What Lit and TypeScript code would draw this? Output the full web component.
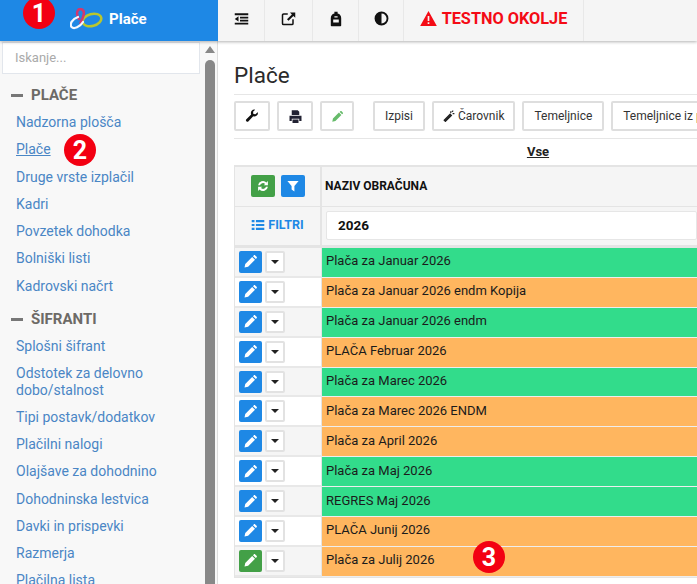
import {LitElement, html, css, svg} from "lit";
import {customElement} from "lit/decorators.js";

const GREEN = "#32dc8b";
const ORANGE = "#ffb65f";

const rows = [
  {name: "Plača za Januar 2026", color: GREEN},
  {name: "Plača za Januar 2026 endm Kopija", color: ORANGE},
  {name: "Plača za Januar 2026 endm", color: GREEN},
  {name: "PLAČA Februar 2026", color: ORANGE},
  {name: "Plača za Marec 2026", color: GREEN},
  {name: "Plača za Marec 2026 ENDM", color: ORANGE},
  {name: "Plača za April 2026", color: ORANGE},
  {name: "Plača za Maj 2026", color: GREEN},
  {name: "REGRES Maj 2026", color: GREEN},
  {name: "PLAČA Junij 2026", color: ORANGE},
  {name: "Plača za Julij 2026", color: ORANGE, open: true},
];

const pencil = svg`<path d="M3 13.200 2 18l4.800-1L16 7.800 12.200 4zM13.300 2.900l3.800 3.800 1-1c.6-.6.6-1.400 0-2l-1.800-1.800c-.6-.6-1.400-.6-2 0z" fill="currentColor"/>`;

const icon = (body: unknown, size = 14) =>
  html`<svg width=${size} height=${size} viewBox="0 0 20 20">${body}</svg>`;

@customElement("app-root")
export class AppRoot extends LitElement {
  static styles = css`
    :host {
      display: block;
      width: 697px;
      height: 584px;
      overflow: hidden;
      position: relative;
      font-family: Roboto, sans-serif;
      font-size: 13px;
      color: #222;
      background: #fff;
    }
    .topbar {
      display: flex;
      height: 41px;
      background: #f5f5f5;
      box-shadow: 0 1px 3px rgba(0, 0, 0, 0.3);
      position: relative;
    }
    .brand {
      width: 218px;
      flex: none;
      background: #1e88e5;
      display: flex;
      align-items: center;
      padding: 0 0 3px 70px;
      box-sizing: border-box;
      gap: 6px;
      color: #fff;
      font-weight: 700;
      font-size: 15px;
    }
    .tool {
      display: flex;
      align-items: center;
      justify-content: center;
      padding-bottom: 4px;
      border-right: 1px solid #e8e8e8;
      color: #111;
      box-sizing: border-box;
    }
    .warn {
      width: 180px;
      gap: 5px;
      color: #f40b15;
      font-weight: 700;
      font-size: 16.300px;
    }
    .body {
      display: flex;
      height: 543px;
    }
    .sidebar {
      width: 218px;
      flex: none;
      background: #f8f8f8;
      border-right: 1px solid #ddd;
      box-sizing: border-box;
      display: flex;
      overflow: hidden;
    }
    .side-content {
      width: 205px;
      flex: none;
    }
    .search {
      margin: 1px 0 0 2px;
      width: 198px;
      height: 32px;
      box-sizing: border-box;
      background: #fff;
      border: 1px solid #e2e6ec;
      color: #aaa;
      padding: 0 12px;
      line-height: 30px;
    }
    .group {
      display: flex;
      align-items: center;
      gap: 8px;
      padding-left: 11px;
      color: #6d6a66;
      font-weight: 700;
      font-size: 15px;
      height: 20px;
      margin: 11px 0 4px;
    }
    .group i {
      width: 12px;
      height: 3px;
      background: #777;
    }
    .group.second {
      margin: 9px 0 4px;
    }
    .link {
      display: block;
      padding: 5px 10px 5.300px 16px;
      color: #4a86c5;
      font-size: 14px;
      line-height: 17px;
    }
    .group.second ~ .link {
      padding-bottom: 5.100px;
    }
    .link.active {
      text-decoration: underline;
    }
    .scroll {
      width: 10px;
      display: flex;
      flex-direction: column;
      align-items: center;
    }
    .scroll .up {
      margin-top: 5px;
      width: 0;
      height: 0;
      border: 5px solid transparent;
      border-top: 0;
      border-bottom: 7px solid #888;
    }
    .scroll .thumb {
      margin-top: 7px;
      width: 10px;
      flex: 1;
      border-radius: 5px 5px 0 0;
      background: #888;
    }
    .main {
      flex: 1;
      min-width: 0;
      padding: 0 0 0 16px;
      overflow: hidden;
    }
    h1 {
      margin: 0;
      font-weight: 400;
      font-size: 22.500px;
      height: 53px;
      line-height: 68px;
      color: #2b2b2b;
      border-bottom: 1px solid #e6e6e6;
    }
    .buttons {
      display: flex;
      padding: 6px 0 7px;
      gap: 7px;
      border-bottom: 1px solid #e6e6e6;
      white-space: nowrap;
    }
    .btn {
      height: 30px;
      box-sizing: border-box;
      border: 2px solid #dedede;
      border-radius: 2px;
      background: #fff;
      display: flex;
      align-items: center;
      justify-content: center;
      flex: none;
      color: #333;
      font-size: 12px;
      gap: 3px;
    }
    .btn.ic {
      width: 36px;
    }
    .btn.txt {
      padding: 0 10px;
    }
    .gap {
      width: 5px;
      flex: none;
    }
    .vse {
      height: 26px;
      line-height: 26px;
      text-align: center;
      width: 608px;
      font-weight: 700;
      font-size: 13px;
      text-decoration: underline;
    }
    .table {
      display: grid;
      grid-template-columns: 87px 1fr;
      border-top: 2px solid #e4e4e4;
      border-left: 1px solid #e4e4e4;
      border-bottom: 1px solid #e4e4e4;
    }
    .head {
      background: #f5f5f5;
      border-right: 2px solid #e4e4e4;
      display: flex;
      align-items: center;
      justify-content: center;
      gap: 6px;
      box-sizing: border-box;
    }
    .head.title {
      border-right: 0;
      justify-content: flex-start;
      padding-left: 3px;
      font-weight: 700;
      font-size: 12px;
      color: #111;
    }
    .h1 {
      height: 40px;
      padding-bottom: 2px;
      border-bottom: 1px solid #e4e4e4;
    }
    .h2 {
      height: 41px;
      padding-bottom: 3px;
      border-bottom: 3px solid #e4e4e4;
    }
    .square {
      width: 24px;
      height: 22px;
      border-radius: 2px;
      display: flex;
      align-items: center;
      justify-content: center;
      color: #fff;
    }
    .filtri {
      color: #1e88e5;
      font-weight: 700;
      font-size: 12.500px;
      gap: 3px;
    }
    .head.input {
      border-right: 0;
      justify-content: flex-start;
      padding: 0 0 2px 4px;
    }
    .field {
      flex: 1;
      height: 29px;
      background: #fff;
      border: 1px solid #e6e6e6;
      border-radius: 2px;
      box-sizing: border-box;
      padding-left: 11px;
      line-height: 27px;
      font-weight: 700;
      font-size: 13.500px;
      color: #111;
    }
    .actions {
      height: 29.900px;
      box-sizing: border-box;
      display: flex;
      align-items: center;
      gap: 3px;
      padding-left: 4px;
      background: #fff;
      border-right: 1px solid #e4e4e4;
      border-bottom: 2px solid #e8e8e8;
    }
    .actions.alt {
      background: #f5f5f5;
    }
    .edit {
      width: 23px;
      height: 22px;
      border-radius: 2px;
      background: #1e88e5;
      color: #fff;
      display: flex;
      align-items: center;
      justify-content: center;
    }
    .edit.open {
      background: #43a047;
    }
    .drop {
      width: 20px;
      height: 22px;
      box-sizing: border-box;
      background: #fff;
      border: 2px solid #e2e2e2;
      border-radius: 2px;
      display: flex;
      align-items: center;
      justify-content: center;
    }
    .drop::after {
      content: "";
      border: 4px solid transparent;
      border-top: 4px solid #222;
      border-bottom: 0;
    }
    .name {
      height: 29.900px;
      box-sizing: border-box;
      padding: 0 0 3px 4px;
      display: flex;
      align-items: center;
      border-bottom: 1px solid #eee;
      font-size: 13px;
      color: #1b1b1b;
      white-space: nowrap;
    }
    .pin {
      position: absolute;
      width: 32px;
      height: 32px;
      border-radius: 50%;
      background: #f30012;
      color: #fff;
      font-weight: 700;
      font-size: 25px;
      display: flex;
      align-items: center;
      justify-content: center;
    }
  `;

  render() {
    const group1 = ["Nadzorna plošča", "Plače", "Druge vrste izplačil", "Kadri", "Povzetek dohodka", "Bolniški listi", "Kadrovski načrt"];
    const group2 = ["Splošni šifrant", "Odstotek za delovno dobo/stalnost", "Tipi postavk/dodatkov", "Plačilni nalogi", "Olajšave za dohodnino", "Dohodninska lestvica", "Davki in prispevki", "Razmerja", "Plačilna lista"];
    return html`
      <div class="topbar">
        <div class="brand">
          <svg width="33" height="22" viewBox="0 0 33 22" fill="none">
            <ellipse cx="22" cy="12" rx="9.500" ry="6" transform="rotate(-15 22 12)" stroke="#b9c62e" stroke-width="2.500"/>
            <path d="M9 11C5 5 8 0 11.500 1.200 15.500 2.500 14 8 10.500 15" stroke="#d2386f" stroke-width="2.500" stroke-linecap="round"/>
            <path d="M8 9C2 11-.5 16 1.500 19 4 21.500 10 19 13 14" stroke="#f4f8ff" stroke-width="2.200" stroke-linecap="round"/>
          </svg>
          <span>Plače</span>
        </div>
        <div class="tool" style="width:47px">
          ${icon(svg`<path d="M1 3h18v2.500H1zM8 7.500h11V10H8zM8 11.500h11V14H8zM1 15.500h18V18H1zM6 7v7L1 10.500z" fill="currentColor"/>`, 15)}
        </div>
        <div class="tool" style="width:48px">
          ${icon(svg`<path d="M9 4H3.500A1.500 1.500 0 0 0 2 5.500v11A1.500 1.500 0 0 0 3.500 18h11a1.500 1.500 0 0 0 1.500-1.500V11" fill="none" stroke="currentColor" stroke-width="2"/><path d="M12 2h7v7l-2.500-2.500L10 13l-2-2 6.500-6.500z" fill="currentColor"/>`, 15)}
        </div>
        <div class="tool" style="width:46px">
          ${icon(svg`<path d="M8 1h4v2.200c3 .6 4.500 3 4.500 5.800v9a1 1 0 0 1-1 1h-11a1 1 0 0 1-1-1V9c0-2.800 1.500-5.200 4.500-5.800z" fill="currentColor"/><path d="M6.500 10.500h7v4h-7zM8 6.500h4V8H8z" fill="#f5f5f5"/>`, 16)}
        </div>
        <div class="tool" style="width:45px">
          ${icon(svg`<circle cx="10" cy="10" r="8" fill="none" stroke="currentColor" stroke-width="2.500"/><path d="M10 2a8 8 0 0 0 0 16z" fill="currentColor"/>`, 15)}
        </div>
        <div class="tool warn">
          <svg width="17" height="15" viewBox="0 0 20 18"><path fill-rule="evenodd" d="M10 0 20 18H0zM9 6v6h2V6zM9 13.500v2h2v-2z" fill="currentColor"/></svg>
          <span>TESTNO OKOLJE</span>
        </div>
      </div>
      <div class="body">
        <div class="sidebar">
          <div class="side-content">
            <div class="search">Iskanje...</div>
            <div class="group"><i></i>PLAČE</div>
            ${group1.map((t) => html`<a class="link ${t === "Plače" ? "active" : ""}">${t}</a>`)}
            <div class="group second"><i></i>ŠIFRANTI</div>
            ${group2.map((t) => html`<a class="link">${t}</a>`)}
          </div>
          <div class="scroll"><div class="up"></div><div class="thumb"></div></div>
        </div>
        <div class="main">
          <h1>Plače</h1>
          <div class="buttons">
            <div class="btn ic">${icon(svg`<path d="M18.500 5.500a5 5 0 0 1-6.800 4.700L5 17.500a2 2 0 0 1-3-3l6.800-6.700A5 5 0 0 1 14.500 1L11.500 4l.5 3 3 .5 3-3z" fill="#111"/>`)}</div>
            <div class="btn ic">${icon(svg`<path d="M5 1.500h8l2 2V8H5zM2 9h16v7h-3v-3H5v3H2zM6 14h8v4.500H6z" fill="#223"/>`, 15)}</div>
            <div class="btn ic" style="width:34px;color:#66bb6a">${icon(pencil, 13)}</div>
            <div class="gap"></div>
            <div class="btn txt">Izpisi</div>
            <div class="btn txt" style="padding:0 9px">
              ${icon(svg`<path d="M2 17 12 7l2 2L4 19zM13 2v3M16 6h3M15 3l2-2" stroke="#222" stroke-width="2" fill="#222"/>`, 12)}Čarovnik
            </div>
            <div class="btn txt">Temeljnice</div>
            <div class="btn txt">Temeljnice iz plač</div>
          </div>
          <div class="vse">Vse</div>
          <div class="table">
            <div class="head h1">
              <div class="square" style="background:#43a047">
                ${icon(svg`<path d="M3 9a7 7 0 0 1 12-4l2-2v6h-6l2-2a4.500 4.500 0 0 0-7.300 2zM17 11a7 7 0 0 1-12 4l-2 2v-6h6l-2 2a4.500 4.500 0 0 0 7.300-2z" fill="#fff"/>`, 14)}
              </div>
              <div class="square" style="background:#1e88e5">
                ${icon(svg`<path d="M2 3h16l-6 7v8l-4-3v-5z" fill="#fff"/>`, 14)}
              </div>
            </div>
            <div class="head title h1">NAZIV OBRAČUNA</div>
            <div class="head filtri h2">
              ${icon(svg`<path d="M1 3h4v3H1zM7 3h12v3H7zM1 8.500h4v3H1zM7 8.500h12v3H7zM1 14h4v3H1zM7 14h12v3H7z" fill="currentColor"/>`, 14)}FILTRI
            </div>
            <div class="head input h2"><div class="field">2026</div></div>
            ${rows.map((r, i) => html`
              <div class="actions ${i % 2 ? "" : "alt"}">
                <div class="edit ${r.open ? "open" : ""}">${icon(pencil, 15)}</div>
                <div class="drop"></div>
              </div>
              <div class="name" style="background:${r.color}">${r.name}</div>
            `)}
          </div>
        </div>
      </div>
      <div class="pin" style="left:23px;top:-3px">1</div>
      <div class="pin" style="left:64px;top:134px">2</div>
      <div class="pin" style="left:473px;top:541px">3</div>
    `;
  }
}
